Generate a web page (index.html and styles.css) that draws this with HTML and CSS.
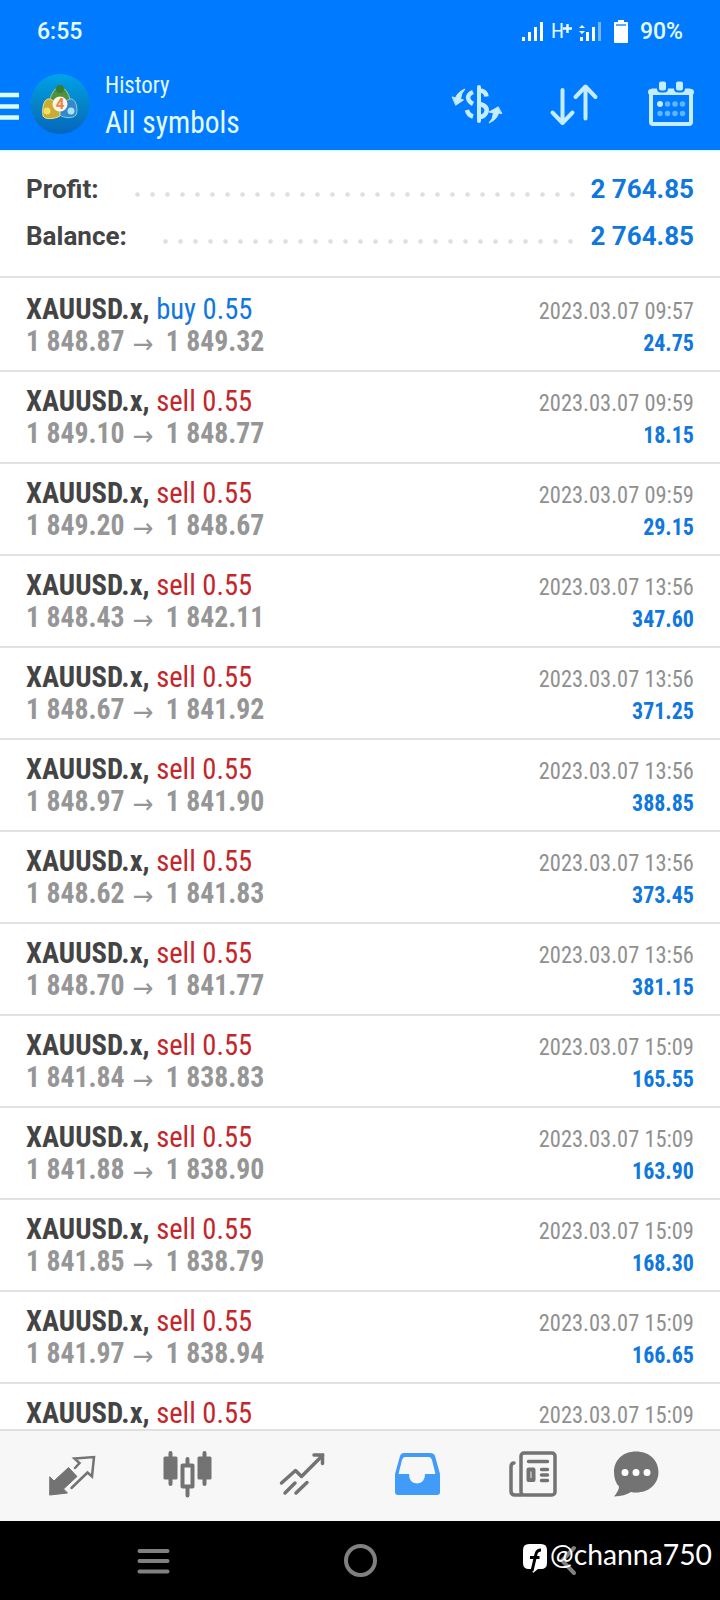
FILE: index.html
```html
<!DOCTYPE html>
<html lang="en">
<head>
<meta charset="utf-8">
<title>History</title>
<link rel="stylesheet" href="styles.css">
</head>
<body>
<div class="phone">
<div class="status">
  <span class="clock">6:55</span>
  <svg class="status-icons" width="127" height="30" viewBox="0 0 127 30">
    <g fill="#fff"><path d="M11 23h3v4h-3zM17 18h3v9h-3zM23 13h3v14h-3zM29 8h3v19h-3zM69 23h3v4h-3zM75 18h3v9h-3zM81 13h3v14h-3zM68 14l3-3 3 3zM68 17l3 3 3-3z"/><path opacity=".45" d="M87 8h3v19h-3z"/>
    <path d="M107 6h6v2h3a1 1 0 0 1 1 1v19a1 1 0 0 1-1 1h-12a1 1 0 0 1-1-1v-19a1 1 0 0 1 1-1h3z"/></g>
    <path d="M105 11h10" stroke="#5aa9ff" stroke-width="2"/>
    <text class="hplus" x="40" y="24">H</text>
    <path d="M52 14.500h9M56.500 10v9" stroke="#e4fbff" stroke-width="2.500"/>
  </svg>
  <span class="battery">90%</span>
</div>
<header class="bar">
  <svg class="burger" width="20" height="30" viewBox="0 0 20 30"><path d="M0 3h19M0 14.500h19M0 25.500h19" stroke="#d9fbff" stroke-width="4.500"/></svg>
  <svg class="logo" width="60" height="62" viewBox="0 0 60 62">
    <defs>
      <linearGradient id="disc" x1="0" y1="0" x2="0" y2="1"><stop offset="0" stop-color="#00a2ea"/><stop offset=".5" stop-color="#0584c8"/><stop offset="1" stop-color="#0566bd"/></linearGradient>
    </defs>
    <ellipse cx="30" cy="31" rx="29.500" ry="30" fill="url(#disc)"/>
    <path d="M30 14c6 0 11 11 10 16H20c-1-5 4-16 10-16z" fill="#4f9142" stroke="#a9cf86"/>
    <path d="M18 26c5-1 11 7 12 17-5 3-15 4-17 0-1-6 0-16 5-17z" fill="#c9ac34" stroke="#eadf8c"/>
    <path d="M42 26c5 2 6 12 4 16-3 4-13 3-16 0 0-8 6-17 12-16z" fill="#3689c5" stroke="#8ccbe8"/>
    <circle cx="30" cy="16" r="4" fill="#3a7c30"/><circle cx="17" cy="38" r="3.500" fill="#f4df65"/><circle cx="41" cy="38" r="3.500" fill="#a5e5fa"/>
    <circle cx="30" cy="31" r="7.500" fill="#fff5ea"/>
    <text class="four" x="30" y="36" text-anchor="middle">4</text>
  </svg>
  <div class="titles"><div class="t1">History</div><div class="t2">All symbols</div></div>
  <svg class="actions" width="260" height="60" viewBox="440 75 260 60" fill="none" stroke="#c5ecff" stroke-linecap="round" stroke-linejoin="round">
    <path d="M479 87v34" stroke-width="4"/>
    <path d="M479 90.500c5 0 7 2 7.500 6M473 92c-7 3-6 9 0 12M479 104c7 1 9 5 7 9q-2 4-7 4M467 110q1 5 6 6.500" stroke-width="4.500" stroke-linecap="butt"/>
    <path d="M452.500 97l3 1q2-6 9.500-9-4 4-4.500 10l3 1-7.500 5z" fill="#c5ecff" stroke-width="1"/>
    <path d="M501.500 113.500l-3-.5q-1 6-9.500 10 4-4 4.500-10l-4.500-1 9-5z" fill="#c5ecff" stroke-width="1"/>
    <path d="M562.500 90v33M552.500 112.500l10 10.500 10-10.500M585.500 118.500V87M575.500 97l10-10.500 10 10.500" stroke-width="4"/>
    <rect x="651" y="90.500" width="40" height="33.500" rx="2" stroke-width="4"/>
    <path d="M651 92h40" stroke-width="6"/>
    <rect x="658" y="80.500" width="9" height="11" rx="3" fill="#c5ecff" stroke="#007aff" stroke-width="2"/>
    <rect x="675" y="80.500" width="9" height="11" rx="3" fill="#c5ecff" stroke="#007aff" stroke-width="2"/>
    <path d="M667.500 104h.01M675 104h.01M682.500 104h.01M660 113.500h.01M667.500 113.500h.01M675 113.500h.01M682.500 113.500h.01" stroke="#62b5ff" stroke-width="5.500"/>
    <path d="M660 104h.01" stroke-width="6"/>
  </svg>
</header>
<section class="summary">
  <div class="sum"><span class="label">Profit:</span><i class="dots profit"></i><span class="total">2 764.85</span></div>
  <div class="sum"><span class="label">Balance:</span><i class="dots balance"></i><span class="total">2 764.85</span></div>
</section>
<main class="deals">
  <div class="deal"><p><b>XAUUSD.x,</b> <span class="buy">buy 0.55</span></p><time>2023.03.07 09:57</time><p class="px">1 848.87 <i>→</i> 1 849.32</p><strong>24.75</strong></div>
  <div class="deal"><p><b>XAUUSD.x,</b> <span class="sell">sell 0.55</span></p><time>2023.03.07 09:59</time><p class="px">1 849.10 <i>→</i> 1 848.77</p><strong>18.15</strong></div>
  <div class="deal"><p><b>XAUUSD.x,</b> <span class="sell">sell 0.55</span></p><time>2023.03.07 09:59</time><p class="px">1 849.20 <i>→</i> 1 848.67</p><strong>29.15</strong></div>
  <div class="deal"><p><b>XAUUSD.x,</b> <span class="sell">sell 0.55</span></p><time>2023.03.07 13:56</time><p class="px">1 848.43 <i>→</i> 1 842.11</p><strong>347.60</strong></div>
  <div class="deal"><p><b>XAUUSD.x,</b> <span class="sell">sell 0.55</span></p><time>2023.03.07 13:56</time><p class="px">1 848.67 <i>→</i> 1 841.92</p><strong>371.25</strong></div>
  <div class="deal"><p><b>XAUUSD.x,</b> <span class="sell">sell 0.55</span></p><time>2023.03.07 13:56</time><p class="px">1 848.97 <i>→</i> 1 841.90</p><strong>388.85</strong></div>
  <div class="deal"><p><b>XAUUSD.x,</b> <span class="sell">sell 0.55</span></p><time>2023.03.07 13:56</time><p class="px">1 848.62 <i>→</i> 1 841.83</p><strong>373.45</strong></div>
  <div class="deal"><p><b>XAUUSD.x,</b> <span class="sell">sell 0.55</span></p><time>2023.03.07 13:56</time><p class="px">1 848.70 <i>→</i> 1 841.77</p><strong>381.15</strong></div>
  <div class="deal"><p><b>XAUUSD.x,</b> <span class="sell">sell 0.55</span></p><time>2023.03.07 15:09</time><p class="px">1 841.84 <i>→</i> 1 838.83</p><strong>165.55</strong></div>
  <div class="deal"><p><b>XAUUSD.x,</b> <span class="sell">sell 0.55</span></p><time>2023.03.07 15:09</time><p class="px">1 841.88 <i>→</i> 1 838.90</p><strong>163.90</strong></div>
  <div class="deal"><p><b>XAUUSD.x,</b> <span class="sell">sell 0.55</span></p><time>2023.03.07 15:09</time><p class="px">1 841.85 <i>→</i> 1 838.79</p><strong>168.30</strong></div>
  <div class="deal"><p><b>XAUUSD.x,</b> <span class="sell">sell 0.55</span></p><time>2023.03.07 15:09</time><p class="px">1 841.97 <i>→</i> 1 838.94</p><strong>166.65</strong></div>
  <div class="deal"><p><b>XAUUSD.x,</b> <span class="sell">sell 0.55</span></p><time>2023.03.07 15:09</time></div>
</main>
<nav class="tabs">
  <svg width="720" height="89" viewBox="0 1432 720 89" fill="none" stroke="#737373" stroke-width="3" stroke-linejoin="round" stroke-linecap="round">
    <path d="M50 1477l4 4 14.500-13.500 8.500 9-13.500 12.500 4 4-17.500 2z" fill="#737373" stroke-width="1"/>
    <path d="M75 1468l4.500-5-5-4.500 19.500-1.500-2 19.500-4.500-4-16 15.500" stroke-width="2.500" stroke-linejoin="miter"/>
    <path d="M170.500 1453v31M204.500 1453v31M187.500 1459v6M187.500 1488v7.500" stroke-width="4"/>
    <path d="M165 1458h11v20h-11zM199 1458h11v20h-11z" fill="#737373"/>
    <path d="M182.500 1465.500h10v21h-10z" stroke-width="4"/>
    <path d="M281.500 1483l14-12.500 6 6 21-21M285 1493l10-10M296 1493l11-10.500" stroke-width="3.500"/>
    <path d="M314 1455h8.500v8.500" stroke-width="3.500" stroke-linejoin="miter"/>
    <path fill="#419bf9" stroke="none" fill-rule="evenodd" d="M404 1453h26q4 0 5 3l5 18v18q0 3-3 3h-39q-3 0-3-3v-18l5-18q1-3 4-3zm1 4q-2 0-3 3l-3 12q-1 2 1 2h9q0 9 8 9.500 8-.5 8-9.500h9q2 0 1-2l-3-12q-1-3-3-3z"/>
    <rect x="521" y="1453" width="34" height="42" rx="3" stroke-width="3.500"/>
    <path d="M514 1463q-3 0-3 4v24q0 4 4 4h7M528.500 1461.500h19M541.500 1469.500h6M541.500 1475h6M541.500 1480.500h6" stroke-width="3.500"/>
    <path d="M528.500 1469.500h5v10.500h-5z" stroke-width="4"/>
    <path d="M636 1451.500c13 0 22.500 8.500 22.500 20.500s-9.500 20.500-22.500 20.500q-3 0-5-.5-6 4-17 4.500 5-6 5-10-5-5-5-14.500c0-12 9-20.500 22-20.500z" fill="#737373" stroke="none"/>
    <path d="M625 1472.500h.01M636 1472.500h.01M647 1472.500h.01" stroke="#fff" stroke-width="7"/>
  </svg>
</nav>
<footer class="sys">
  <svg width="720" height="79" viewBox="0 1521 720 79" fill="none" stroke="#808080" stroke-width="4" stroke-linecap="round">
    <path d="M139.500 1551h28M139.500 1561h28M139.500 1571.500h28"/>
    <circle cx="360.500" cy="1560.500" r="14.500"/>
    <path d="M574 1548l-12 12.500 12 12.500"/>
    <path d="M529 1544h12q6 0 6 6v13q0 6-6 6h-3l-5 4-1-4h-3q-6 0-6-6v-13q0-6 6-6z" fill="#fff" stroke="none"/>
    <path d="M532 1571l4-17q1-4 5-4M530 1557.500h9.500" stroke="#000" stroke-width="3" stroke-linecap="butt"/>
    <text class="handle" x="550" y="1565" textLength="162" lengthAdjust="spacingAndGlyphs">@channa750</text>
  </svg>
</footer>
</div>
</body>
</html>
```
FILE: styles.css
```css
* { box-sizing: border-box; }
body { margin: 0; background: #fff; }
p { margin: 0; }
.phone { width: 720px; height: 1600px; overflow: hidden; display: flex; flex-direction: column; font-family: "Roboto Condensed", Roboto, sans-serif; font-stretch: 75%; }
.status { height: 60px; background: #007aff; color: #e4fbff; display: flex; align-items: center; padding: 3px 37px 0 37px; font: 500 23px/28px Roboto, sans-serif; }
.status-icons { margin-left: auto; margin-top: -6px; }
.battery { margin-left: 2px; }
.hplus { font: 400 21px Roboto, sans-serif; font-stretch: 75%; fill: #e4fbff; }
.bar { height: 90px; background: #007aff; display: flex; align-items: flex-start; color: #e2fbff; }
.burger { margin-top: 32px; }
.logo { margin: 13px 0 0 10px; }
.four { font: 700 15px Roboto, sans-serif; fill: #ed843d; }
.titles { margin-left: 15px; white-space: nowrap; transform: scaleX(.95); transform-origin: 0 0; }
.t1 { font-size: 24px; line-height: 28px; margin-top: 11px; }
.t2 { font-size: 31px; line-height: 36px; margin-top: 6px; }
.actions { margin: 15px 20px 0 auto; }
.summary { height: 128px; border-bottom: 2px solid #e1e1e1; border-top: 1px solid #c9fdff; padding: 15px 26px 0; font: 700 26px/47px Roboto, sans-serif; color: #444; }
.sum { display: flex; height: 47px; }
.total { margin-left: auto; color: #0f77dd; }
.dots { height: 5px; margin-top: 26px; background: radial-gradient(circle, #dfdfdf 1.9px, transparent 2.6px) 0 0 / 15px 5px; }
.profit { width: 450px; margin-left: 31px; }
.balance { width: 420px; margin-left: 31px; }
.deals { flex: 1; min-height: 0; overflow: hidden; padding-top: 2px; }
.deal { height: 92px; border-bottom: 2px solid #e1e1e1; padding: 11px 26px 0; display: grid; grid-template-columns: 1fr auto; grid-template-rows: 32px 32px; align-items: baseline; font-size: 30px; line-height: 36px; white-space: nowrap; color: #444; }
.deal p { transform: scaleX(.953); transform-origin: 0 0; }
.deal .px { font-weight: 700; color: #969696; transform: scaleX(.925); }
.px i { font: 400 27px/0 "DejaVu Sans", sans-serif; vertical-align: -2px; margin: 0 6px 0 2px; }
.deal time { font-size: 24px; color: #909090; text-align: right; transform: scaleX(.935); transform-origin: 100% 0; }
.deal strong { font-size: 24px; color: #0f77dd; text-align: right; transform: scaleX(.915); transform-origin: 100% 0; }
.buy { color: #0f77dd; }
.sell { color: #c3272c; }
.tabs { height: 92px; background: #f7f7f7; border-top: 2px solid #e1e1e1; padding-top: 1px; }
.tabs svg, .sys svg { display: block; }
.sys { height: 79px; background: #000; }
.handle { font: 400 28px Lato, sans-serif; fill: #fff; stroke: none; }
```
